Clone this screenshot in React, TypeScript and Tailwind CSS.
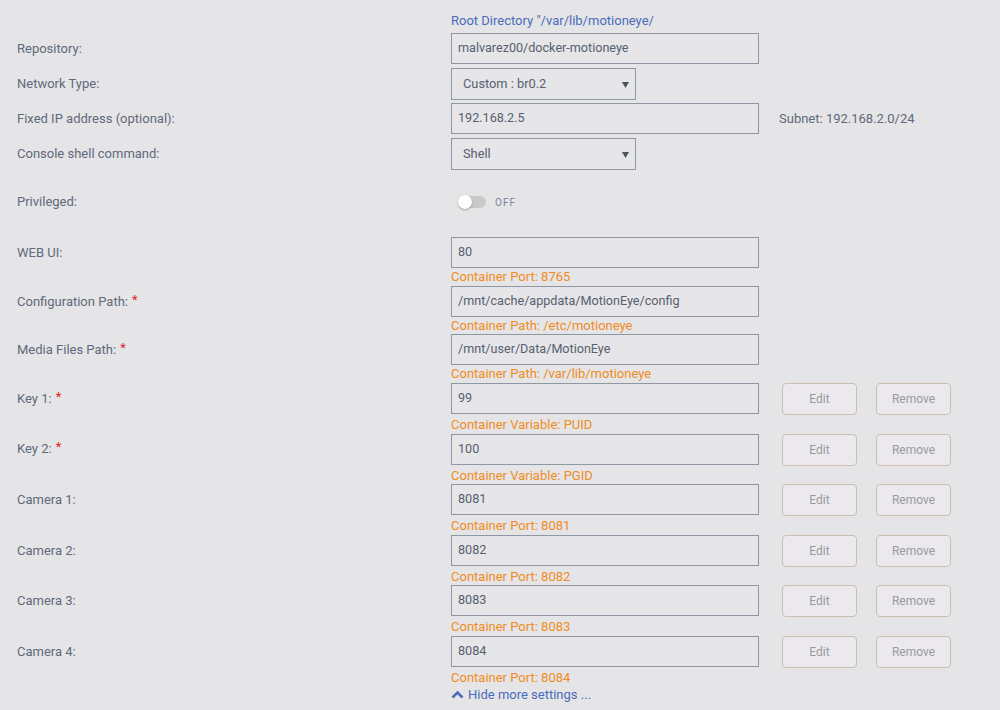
import React from "react";

const font = { fontFamily: "Roboto, 'Noto Sans', sans-serif" };

function Label({ text, req }: { text: string; req?: boolean }) {
  return (
    <div className="w-[451px] shrink-0 pl-[17px] h-[31px] flex items-center text-[13px] text-[#5f6a7a]">
      <span>{text}</span>
      {req && <span className="text-[#e0242c] ml-[4px] relative top-[-2px]">*</span>}
    </div>
  );
}

function Input({ value }: { value: string }) {
  return (
    <div className="w-[308px] h-[31px] border border-[#8e98a5] bg-[#e6e5e8] flex items-center px-[6px] text-[12.6px] text-[#566170]">
      {value}
    </div>
  );
}

function Select({ value }: { value: string }) {
  return (
    <div className="w-[185px] h-[32px] border border-[#8e98a5] bg-[#e6e5e8] flex items-center justify-between pl-[11px] pr-[6px] text-[12.8px] text-[#566170]">
      <span>{value}</span>
      <svg width="7" height="7" viewBox="0 0 7 7">
        <polygon points="0,1 7,1 3.5,7" fill="#4a5260" />
      </svg>
    </div>
  );
}

function Hint({ text }: { text: string }) {
  return <div className="text-[13px] leading-[17px] text-[#ef8d1d]">{text}</div>;
}

function Btn({ text }: { text: string }) {
  return (
    <div className="w-[75px] h-[32px] rounded-[4px] border border-[#cbbfb4] bg-[#ebe9ee] flex items-center justify-center text-[12px] text-[#9a9a9a]">
      {text}
    </div>
  );
}

function SimpleRow({ label, value, hint, req, h }: { label: string; value: string; hint: string; req?: boolean; h: string }) {
  return (
    <div className={`flex ${h}`}>
      <Label text={label} req={req} />
      <div className="flex flex-col">
        <Input value={value} />
        <Hint text={hint} />
      </div>
    </div>
  );
}

function KeyRow({ label, value, hint, req }: { label: string; value: string; hint: string; req?: boolean }) {
  return (
    <div className="flex h-[50.6px]">
      <Label text={label} req={req} />
      <div className="flex flex-col">
        <div className="flex h-[33px] items-start">
          <Input value={value} />
          <div className="ml-[23px]">
            <Btn text="Edit" />
          </div>
          <div className="ml-[19px]">
            <Btn text="Remove" />
          </div>
        </div>
        <Hint text={hint} />
      </div>
    </div>
  );
}

export default function App() {
  return (
    <div className="w-[1000px] h-[710px] bg-[#e5e4e7] overflow-hidden" style={font}>
      <div className="pt-[11px]">
        <div className="flex h-[22px]">
          <div className="w-[451px] shrink-0" />
          <div className="text-[13px] text-[#4a6dba]">Root Directory "/var/lib/motioneye/</div>
        </div>
        <div className="flex h-[35px]">
          <Label text="Repository:" />
          <Input value="malvarez00/docker-motioneye" />
        </div>
        <div className="flex h-[35px]">
          <Label text="Network Type:" />
          <Select value="Custom : br0.2" />
        </div>
        <div className="flex h-[35px]">
          <Label text="Fixed IP address (optional):" />
          <Input value="192.168.2.5" />
          <div className="ml-[20px] h-[31px] flex items-center text-[13px] text-[#5f6a7a]">Subnet: 192.168.2.0/24</div>
        </div>
        <div className="flex h-[35px]">
          <Label text="Console shell command:" />
          <Select value="Shell" />
        </div>
        <div className="flex h-[64px] items-center pb-[6px]">
          <div className="w-[451px] shrink-0 pl-[17px] text-[13px] text-[#5f6a7a]">Privileged:</div>
          <div className="flex items-center ml-[8px]">
            <div className="w-[27px] h-[12px] rounded-full bg-[#c9c9cb] relative">
              <div className="absolute left-[-1px] top-[-1px] w-[14px] h-[14px] rounded-full bg-white shadow-[0_1px_2px_rgba(0,0,0,0.3)]" />
            </div>
            <span className="ml-[9px] text-[10px] tracking-[1px] text-[#7a8595]">OFF</span>
          </div>
        </div>
        <SimpleRow h="h-[49px]" label="WEB UI:" value="80" hint="Container Port: 8765" />
        <SimpleRow h="h-[48px]" label="Configuration Path:" req value="/mnt/cache/appdata/MotionEye/config" hint="Container Path: /etc/motioneye" />
        <SimpleRow h="h-[49px]" label="Media Files Path:" req value="/mnt/user/Data/MotionEye" hint="Container Path: /var/lib/motioneye" />
        <KeyRow label="Key 1:" req value="99" hint="Container Variable: PUID" />
        <KeyRow label="Key 2:" req value="100" hint="Container Variable: PGID" />
        <KeyRow label="Camera 1:" value="8081" hint="Container Port: 8081" />
        <KeyRow label="Camera 2:" value="8082" hint="Container Port: 8082" />
        <KeyRow label="Camera 3:" value="8083" hint="Container Port: 8083" />
        <KeyRow label="Camera 4:" value="8084" hint="Container Port: 8084" />
        <div className="flex -mt-[2px]">
          <div className="w-[451px] shrink-0" />
          <div className="flex items-center text-[13px] text-[#4a6dba]">
            <svg width="13" height="9" viewBox="0 0 13 9" className="mr-[4px]">
              <path d="M1.5 7.5 L6.5 2.5 L11.5 7.5" stroke="#4a6dba" strokeWidth="2.6" fill="none" />
            </svg>
            Hide more settings ...
          </div>
        </div>
      </div>
    </div>
  );
}
